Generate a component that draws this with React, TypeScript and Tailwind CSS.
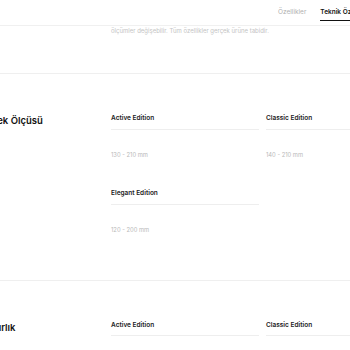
import React from "react";

const font = { fontFamily: "Inter, 'Noto Sans', sans-serif" };

function Spec({ name, value }: { name: string; value: string }) {
  return (
    <div className="flex flex-col">
      <div className="text-[6.5px] font-semibold text-[#222] leading-none pb-[7px] border-b border-[#eeeeee]">{name}</div>
      <div className="text-[5.8px] text-[#b8b8b8] leading-none pt-[22px] pb-[33px]">{value}</div>
    </div>
  );
}

function Section({ title, items }: { title: string; items: { name: string; value: string }[] }) {
  return (
    <div className="flex border-t border-[#efefef] pt-[41px] pb-[14px]">
      <div className="w-[111px] shrink-0 overflow-hidden">
        <div className="text-[9.5px] font-semibold text-[#111] ml-[-14px] whitespace-nowrap mt-[-1px]">{title}</div>
      </div>
      <div className="grid grid-cols-[148px_148px] gap-x-[7px]">
        {items.map((it, i) => (
          <Spec key={i} name={it.name} value={it.value} />
        ))}
      </div>
    </div>
  );
}

export default function App() {
  return (
    <div className="w-[350px] h-[350px] overflow-hidden bg-white" style={font}>
      <div className="h-[26px] border-b border-[#f0f0f0] flex items-start pt-[8px] overflow-hidden">
        <div className="flex gap-[14px] ml-[278px] text-[6.5px] whitespace-nowrap shrink-0">
          <span className="text-[#b0b0b0]">Özellikler</span>
          <span className="text-[#111] font-semibold border-b border-[#111] pb-[2px]">Teknik Özellikler</span>
        </div>
      </div>
      <div className="pl-[111px] h-[47px] text-[6px] text-[#c4c4c4] whitespace-nowrap">
        ölçümler değişebilir. Tüm özellikler gerçek ürüne tabidir.
      </div>
      <Section
        title="Bilek Ölçüsü"
        items={[
          { name: "Active Edition", value: "130 - 210 mm" },
          { name: "Classic Edition", value: "140 - 210 mm" },
          { name: "Elegant Edition", value: "120 - 200 mm" },
        ]}
      />
      <Section
        title="Ağırlık"
        items={[
          { name: "Active Edition", value: "45 g" },
          { name: "Classic Edition", value: "52 g" },
        ]}
      />
    </div>
  );
}
